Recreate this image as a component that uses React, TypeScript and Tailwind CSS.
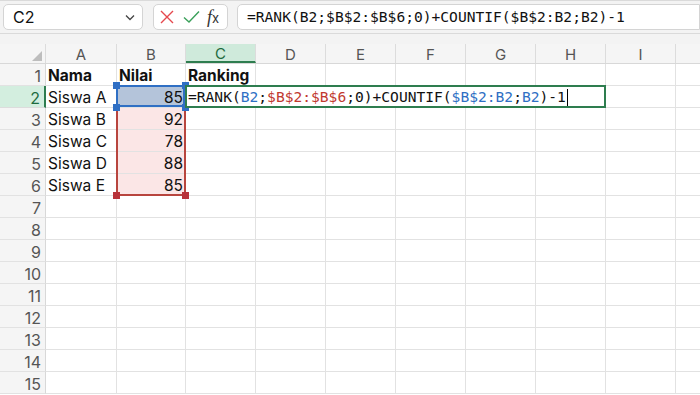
import React from "react";

const cols = [
  { l: "A", w: "w-[71px]" },
  { l: "B", w: "w-[69px]" },
  { l: "C", w: "w-[70px]" },
  { l: "D", w: "w-[70px]" },
  { l: "E", w: "w-[70px]" },
  { l: "F", w: "w-[70px]" },
  { l: "G", w: "w-[70px]" },
  { l: "H", w: "w-[70px]" },
  { l: "I", w: "w-[70px]" },
  { l: "", w: "w-[40px]" },
];

const data: Record<number, [string, string]> = {
  1: ["Nama", "Nilai"],
  2: ["Siswa A", "85"],
  3: ["Siswa B", "92"],
  4: ["Siswa C", "78"],
  5: ["Siswa D", "88"],
  6: ["Siswa E", "85"],
};

const mono = { fontFamily: '"DejaVu Sans Mono", "Liberation Mono", monospace' };
const sans = { fontFamily: 'Inter, "Noto Sans", sans-serif' };

function Handle({ cls, color }: { cls: string; color: string }) {
  return <div className={`absolute w-[7px] h-[7px] ${cls} ${color} z-20`} />;
}

function Formula({ colored }: { colored: boolean }) {
  const blue = colored ? "text-[#2f6fc4]" : "";
  const red = colored ? "text-[#c1392f]" : "";
  return (
    <span className="whitespace-nowrap">
      =RANK(<span className={blue}>B2</span>;<span className={red}>$B$2:$B$6</span>;0)+COUNTIF(
      <span className={blue}>$B$2:B2</span>;<span className={blue}>B2</span>)-1
    </span>
  );
}

export default function App() {
  const rows = Array.from({ length: 15 }, (_, i) => i + 1);
  return (
    <div className="w-[700px] h-[395px] overflow-hidden bg-white text-[#111]" style={sans}>
      {/* toolbar */}
      <div className="h-[34px] bg-[#f3f3f3] border-b border-[#dadada] border-t flex items-start pt-[3px] pl-[3px]">
        <div className="w-[140px] h-[26px] bg-white border border-[#d4d4d4] rounded-[5px] flex items-center justify-between pl-[9px] pr-[6px]">
          <span className="text-[16px] leading-none">C2</span>
          <svg width="12" height="12" viewBox="0 0 12 12">
            <path d="M2 4.5 L6 8.5 L10 4.5" fill="none" stroke="#444" strokeWidth="1.3" />
          </svg>
        </div>
        <div className="ml-[10px] w-[75px] h-[26px] bg-white border border-[#d4d4d4] rounded-[5px] flex items-center pl-[4px] gap-[6px]">
          <svg width="18" height="18" viewBox="0 0 18 18">
            <path d="M3 3 L15 15 M15 3 L3 15" stroke="#e5484d" strokeWidth="1.4" />
          </svg>
          <svg width="19" height="18" viewBox="0 0 19 18">
            <path d="M2 9.5 L7 14 L17 3.5" fill="none" stroke="#3aa05a" strokeWidth="1.4" />
          </svg>
          <span className="text-[18px] italic leading-none text-[#333]" style={{ fontFamily: '"Liberation Serif", serif' }}>
            f<span className="text-[13px] not-italic" style={sans}>x</span>
          </span>
        </div>
        <div className="ml-[9px] flex-1 h-[26px] bg-white border border-[#d4d4d4] rounded-l-[5px] flex items-center pl-[9px] text-[14.6px] text-[#111]" style={mono}>
          <Formula colored={false} />
        </div>
      </div>
      <div className="h-[10px] bg-[#f3f3f3]" />
      {/* column header */}
      <div className="h-[20px] flex bg-[#f5f5f5] border-b border-[#d8d8d8]">
        <div className="w-[46px] shrink-0 relative border-r border-[#dcdcdc]">
          <svg className="absolute right-[3px] bottom-[2px]" width="10" height="10" viewBox="0 0 10 10">
            <path d="M10 0 L10 10 L0 10 Z" fill="#bdbdbd" />
          </svg>
        </div>
        {cols.map((c) => (
          <div
            key={c.l}
            className={`${c.w} shrink-0 flex items-center justify-center pt-[2px] text-[15px] leading-none ${
              c.l === "C"
                ? "bg-[#cfeadb] text-[#1e6b3f] border-b-2 border-[#2e7d4f] border-r border-r-[#dcdcdc]"
                : "text-[#555] border-r border-[#dcdcdc]"
            }`}
          >
            {c.l}
          </div>
        ))}
      </div>
      {rows.map((r) => (
        <div key={r} className="h-[22px] flex">
          <div
            className={`w-[46px] shrink-0 flex items-center justify-end pr-[4px] pt-[2px] text-[16px] leading-none border-b ${
              r === 2
                ? "bg-[#d3eedf] text-[#1e6b3f] border-r-2 border-r-[#2e7d4f] border-b-[#dcdcdc]"
                : "bg-[#f5f5f5] text-[#555] border-r border-[#d8d8d8] border-b-[#e2e2e2]"
            }`}
          >
            {r}
          </div>
          {cols.map((c, ci) => {
            const d = data[r];
            let content: React.ReactNode = null;
            let extra = "";
            let align = "justify-start pl-[2px]";
            if (d && ci === 0) content = d[0];
            if (d && ci === 1) {
              content = d[1];
              if (r > 1) align = "justify-end pr-[2px]";
            }
            if (r === 1 && ci === 2) content = "Ranking";
            const bold = r === 1 ? "font-bold" : "";
            if (ci === 1 && r === 2) extra = "bg-[#b4c4da]";
            if (ci === 1 && r > 2 && r <= 6) extra = "bg-[#fbe6e6]";
            return (
              <div
                key={c.l + r}
                className={`${c.w} shrink-0 relative flex items-center pt-[2px] ${align} text-[15.5px] leading-none border-r border-b border-[#e2e2e2] ${bold} ${extra}`}
              >
                {content}
                {ci === 1 && r === 2 && (
                  <>
                    <div className="absolute inset-0 -left-px -top-px border-2 border-[#2f6fc4] z-10" />
                    <Handle cls="-left-[4px] -top-[4px]" color="bg-[#2f6fc4]" />
                    <Handle cls="-right-[4px] -top-[4px]" color="bg-[#2f6fc4]" />
                    <Handle cls="-left-[4px] -bottom-[4px]" color="bg-[#2f6fc4]" />
                    <Handle cls="-right-[4px] -bottom-[4px]" color="bg-[#2f6fc4]" />
                  </>
                )}
                {ci === 1 && r > 2 && r <= 6 && (
                  <div
                    className={`absolute -left-px right-[-1px] top-[-1px] bottom-[-1px] border-x-2 border-[#b8453e] z-10 ${
                      r === 6 ? "border-b-2" : ""
                    }`}
                  />
                )}
                {ci === 1 && r === 6 && (
                  <>
                    <Handle cls="-left-[4px] -bottom-[4px]" color="bg-[#b8323a]" />
                    <Handle cls="-right-[4px] -bottom-[4px]" color="bg-[#b8323a]" />
                  </>
                )}
                {ci === 2 && r === 2 && (
                  <div
                    className="absolute -left-px -top-px w-[421px] h-[23px] border-2 border-[#2e7d4f] bg-white z-30 flex items-center pl-[1px] pt-[1px] text-[14.6px] text-[#111] font-normal"
                    style={mono}
                  >
                    <Formula colored={true} />
                    <span className="inline-block w-px h-[17px] bg-black ml-[1px]" />
                  </div>
                )}
              </div>
            );
          })}
        </div>
      ))}
    </div>
  );
}
